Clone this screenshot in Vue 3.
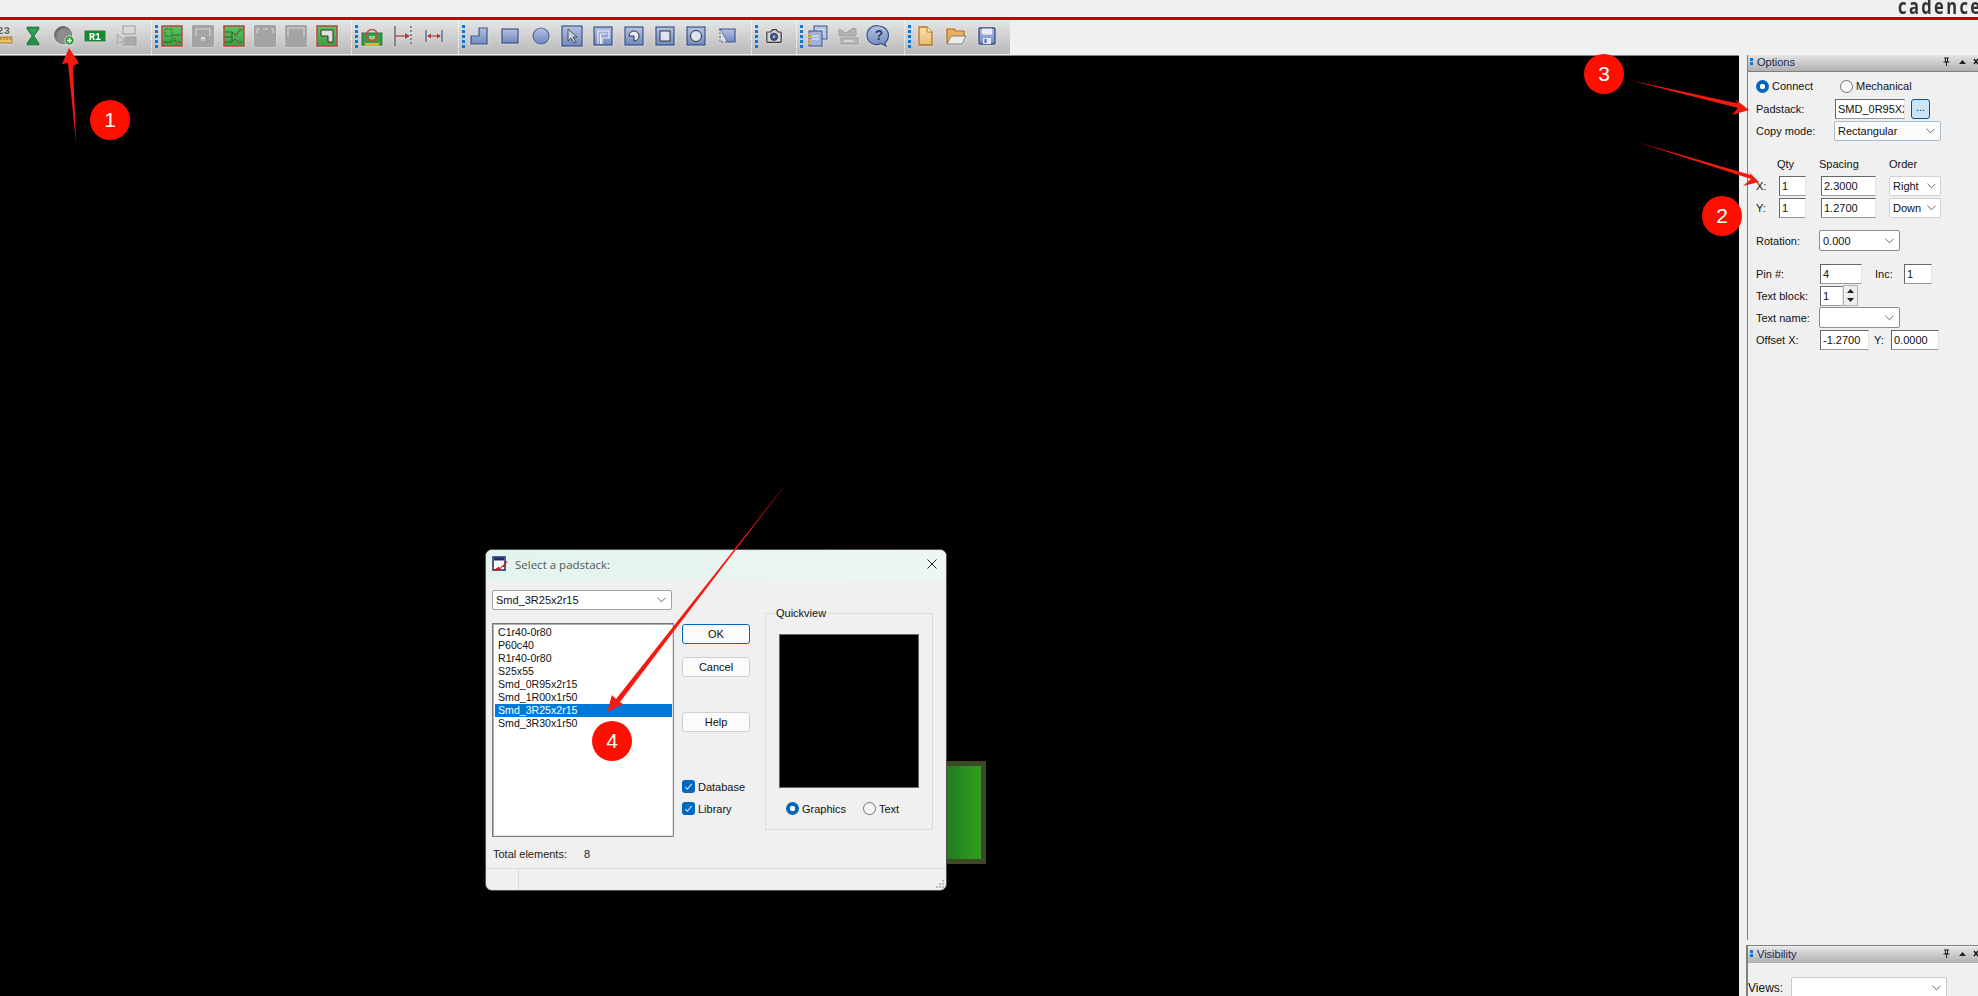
<template>
  <div class="page">
    <svg class="defs" width="0" height="0">
      <defs>
        <linearGradient id="blue" x1="0" y1="0" x2="0" y2="1"><stop offset="0" stop-color="#b4c2e2" /><stop offset="1" stop-color="#7189bf" /></linearGradient>
        <linearGradient id="board" x1="0" y1="0" x2="0" y2="1"><stop offset="0" stop-color="#5ec45e" /><stop offset="1" stop-color="#3aa040" /></linearGradient>
        <linearGradient id="pad" x1="0" y1="0" x2="1" y2="1"><stop offset="0" stop-color="#5c5c5c" /><stop offset="1" stop-color="#b4b4b4" /></linearGradient>
        <linearGradient id="paper" x1="0" y1="0" x2="0" y2="1"><stop offset="0" stop-color="#f8e2a8" /><stop offset="1" stop-color="#e4bf78" /></linearGradient>
      </defs>
    </svg>

    <header class="brandbar"><span class="brand">cadence</span></header>

    <nav class="toolbar">
      <div class="tgroup g1">
        <div class="tool"><svg class="ic" viewBox="0 0 24 24"><text x="7" y="10" class="rtext">23</text><rect x="2" y="13" width="20" height="6" fill="#ecc46e" stroke="#a97f2c" /><path d="M5 13v3M8 13v3M11 13v3M14 13v3M17 13v3M20 13v3" stroke="#8a6420" /></svg></div>
        <div class="tool"><svg class="ic" viewBox="0 0 24 24"><path d="M6 3h12v2l-5 7 5 7v2H6v-2l5-7-5-7z" fill="#2a8f46" stroke="#176b30" stroke-width=".7" /><path d="M8 5h8l-4 6z" fill="#2fa552" /></svg></div>
        <div class="tool"><svg class="ic" viewBox="0 0 24 24"><circle cx="11" cy="11" r="8.500" fill="url(#pad)" stroke="#6c6c6c" /><circle cx="11.500" cy="11.500" r="6.500" fill="#8d8d8d" /><circle cx="17.500" cy="16.500" r="4.600" fill="#2a9a3a" stroke="#e6e6e6" stroke-width=".8" /><path d="M15 16.500h5M17.500 14v5" stroke="#fff" stroke-width="1.400" /></svg></div>
        <div class="tool"><svg class="ic" viewBox="0 0 24 24"><rect x="2" y="7" width="20" height="10" fill="#0f8f2c" stroke="#2c7a3a" /><text x="12" y="15.500" class="rlabel">R1</text></svg></div>
        <div class="tool"><svg class="ic" viewBox="0 0 24 24"><rect x="9" y="2" width="12" height="8" fill="none" stroke="#a8a8a8" stroke-width="1.300" /><rect x="11" y="13" width="11" height="8" fill="#ababab" stroke="#999" /><path d="M3 10v11l3-3 3 4 2-1-3-4h4z" fill="#c8c8c8" stroke="#a2a2a2" /></svg></div>
      </div>

      <div class="tgroup g2">
        <i class="handle"></i>
        <div class="tool"><svg class="ic" viewBox="0 0 24 24"><rect x="2" y="2" width="20" height="20" fill="url(#board)" stroke="#b84c4c" stroke-width="1.600" /><rect x="5" y="5" width="7" height="7" fill="none" stroke="#1d5a26" stroke-dasharray="1 1" /><path d="M12 11h9M3 18h8l2-3 4 3h4" fill="none" stroke="#1d6a2a" /><circle cx="14" cy="15" r="1.300" fill="#59b85c" stroke="#8a3a3a" stroke-width=".6" /><circle cx="17.500" cy="18" r="1.300" fill="#59b85c" stroke="#8a3a3a" stroke-width=".6" /></svg></div>
        <div class="tool"><svg class="ic" viewBox="0 0 24 24"><rect x="1" y="1" width="22" height="22" rx="1.500" fill="#a4a4a4" /><path d="M5 12V5h14v7" fill="none" stroke="#d8d8d8" stroke-width="1.200" /><rect x="10" y="13" width="4" height="4" fill="#d8d8d8" /><rect x="11.300" y="15" width="1.400" height="2" fill="#a4a4a4" /></svg></div>
        <div class="tool"><svg class="ic" viewBox="0 0 24 24"><rect x="2" y="2" width="20" height="20" fill="url(#board)" stroke="#b84c4c" stroke-width="1.600" /><path d="M3 8h7l4 3 4-5h3M3 13h7M3 18h7l3-3 3 3h5M10 8v10" fill="none" stroke="#1d6a2a" /><circle cx="14" cy="11" r="1.300" fill="#59b85c" stroke="#8a3a3a" stroke-width=".6" /><circle cx="18" cy="6" r="1.300" fill="#59b85c" stroke="#8a3a3a" stroke-width=".6" /><circle cx="16" cy="18" r="1.300" fill="#59b85c" stroke="#8a3a3a" stroke-width=".6" /></svg></div>
        <div class="tool"><svg class="ic" viewBox="0 0 24 24"><rect x="1" y="1" width="22" height="22" rx="1.500" fill="#a4a4a4" /><path d="M4 9V5h3M10 5h5M18 5h2v4" fill="none" stroke="#d8d8d8" stroke-width="1.200" /></svg></div>
        <div class="tool"><svg class="ic" viewBox="0 0 24 24"><rect x="1" y="1" width="22" height="22" rx="1.500" fill="#a4a4a4" /><path d="M4 12V4h16v8" fill="none" stroke="#d8d8d8" stroke-width="1.200" /></svg></div>
        <div class="tool"><svg class="ic" viewBox="0 0 24 24"><rect x="2" y="2" width="20" height="20" fill="url(#board)" stroke="#b84c4c" stroke-width="1.600" /><path d="M6 6h12v12h-5v-6H6z" fill="#e0e0e0" stroke="#333" /></svg></div>
      </div>

      <div class="tgroup g3">
        <i class="handle"></i>
        <div class="tool"><svg class="ic" viewBox="0 0 24 24"><rect x="2" y="9" width="20" height="12" fill="#3a9a4a" stroke="#26703a" /><rect x="5" y="19" width="14" height="2.500" fill="#e6b82e" /><path d="M9 12h6v4H9z" fill="#8fd08f" /><circle cx="12" cy="11" r="5.500" fill="none" stroke="#c44c4c" stroke-width="1.600" /></svg></div>
        <div class="tool"><svg class="ic" viewBox="0 0 24 24"><path d="M4 2v20" stroke="#5a5a5a" stroke-width="1.300" /><path d="M20 2v20" stroke="#4a6090" stroke-width="1.300" stroke-dasharray="2 2" /><path d="M4 12h12" stroke="#b03c3c" stroke-width="1.300" /><path d="M19 12l-5-3v6z" fill="#b03c3c" /></svg></div>
        <div class="tool"><svg class="ic" viewBox="0 0 24 24"><path d="M4 6v12M20 6v12" stroke="#4a6090" stroke-width="1.300" /><path d="M7 12h10" stroke="#b03c3c" stroke-width="1.200" /><path d="M5 12l4-2.500v5zM19 12l-4-2.500v5z" fill="#b03c3c" /></svg></div>
      </div>

      <div class="tgroup g4">
        <i class="handle"></i>
        <div class="tool"><svg class="ic" viewBox="0 0 24 24"><path d="M4 12h8V4h8v16H4z" fill="url(#blue)" stroke="#3b5389" stroke-width="1.200" /></svg></div>
        <div class="tool"><svg class="ic" viewBox="0 0 24 24"><rect x="4" y="5" width="16" height="14" fill="url(#blue)" stroke="#3b5389" stroke-width="1.200" /></svg></div>
        <div class="tool"><svg class="ic" viewBox="0 0 24 24"><circle cx="12" cy="12" r="8" fill="url(#blue)" stroke="#4f67a0" stroke-width="1.200" /></svg></div>
        <div class="tool"><svg class="ic" viewBox="0 0 24 24"><rect x="2" y="2" width="20" height="20" fill="url(#blue)" stroke="#3b5389" stroke-width="1.200" /><path d="M8 5v12l3-3 3 5 2-1-3-5h4z" fill="#c8d2ea" stroke="#333" stroke-width=".8" /></svg></div>
        <div class="tool"><svg class="ic" viewBox="0 0 24 24"><rect x="3" y="3" width="18" height="18" fill="url(#blue)" stroke="#3b5389" stroke-width="1.200" /><path d="M7 20V7h11v7h-7v6M9.500 20V10h6" fill="none" stroke="#eef" stroke-width="1.200" /></svg></div>
        <div class="tool"><svg class="ic" viewBox="0 0 24 24"><rect x="3" y="3" width="18" height="18" fill="url(#blue)" stroke="#3b5389" stroke-width="1.200" /><path d="M12 12V7a5 5 0 1 1-5 5h5" fill="#eef" stroke="#333" transform="rotate(-90 12 12)" /></svg></div>
        <div class="tool"><svg class="ic" viewBox="0 0 24 24"><rect x="3" y="3" width="18" height="18" fill="url(#blue)" stroke="#3b5389" stroke-width="1.200" /><rect x="7" y="7" width="10" height="10" fill="#dde3f2" stroke="#333" /></svg></div>
        <div class="tool"><svg class="ic" viewBox="0 0 24 24"><rect x="3" y="3" width="18" height="18" fill="url(#blue)" stroke="#3b5389" stroke-width="1.200" /><circle cx="12" cy="12" r="5.500" fill="#dde3f2" stroke="#333" /></svg></div>
        <div class="tool"><svg class="ic" viewBox="0 0 24 24"><path d="M5 5h15v13H12z" fill="url(#blue)" stroke="#3b5389" stroke-width="1.200" /><path d="M5 5v13h7" fill="#dcdcdc" stroke="#3b5389" stroke-dasharray="2 1.500" /></svg></div>
      </div>

      <div class="tgroup g5">
        <i class="handle"></i>
        <div class="tool"><svg class="ic" viewBox="-3 -3 30 30"><path d="M4 7h4l2-3h5l2 3h3a1 1 0 0 1 1 1v11a1 1 0 0 1-1 1H4a1 1 0 0 1-1-1V8a1 1 0 0 1 1-1z" fill="#d2d2d2" stroke="#3a3a3a" stroke-width="1.500" /><circle cx="12" cy="13" r="4.500" fill="#3a5a9a" stroke="#2c2c2c" /><circle cx="12" cy="13" r="1.600" fill="#a9c0ea" /></svg></div>
      </div>

      <div class="tgroup g6">
        <i class="handle"></i>
        <div class="tool"><svg class="ic" viewBox="0 0 24 24"><rect x="9" y="2" width="13" height="13" fill="#b7c6e4" stroke="#3b5389" /><path d="M12 6h7M12 9h7" stroke="#f2f2f2" /><rect x="4" y="7" width="13" height="15" fill="#9fb2da" stroke="#3b5389" /><path d="M7 12h7M7 15h7" stroke="#f2f2f2" /><path d="M3 10h3M3 13h3M3 16h3M3 19h3" stroke="#e5b92e" stroke-width="1.300" /></svg></div>
        <div class="tool"><svg class="ic" viewBox="0 0 24 24"><path d="M3 5l7 4 7-5 3 1v7H3z" fill="#b2b2b2" stroke="#a0a0a0" /><rect x="5" y="14" width="17" height="6" fill="#b8b8b8" stroke="#9a9a9a" /><path d="M8 17h9" stroke="#dcdcdc" stroke-width="1.500" /></svg></div>
        <div class="tool"><svg class="ic" viewBox="0 0 24 24"><path d="M12 2a9.500 9.500 0 0 1 9.500 9.500c0 3.500-2 6-3.500 7.500l1 3-5-2.500A9.500 9.500 0 1 1 12 2z" fill="url(#blue)" stroke="#3b5389" stroke-width="1.200" /><text x="12" y="16" class="qmark">?</text></svg></div>
      </div>

      <div class="tgroup g7">
        <i class="handle"></i>
        <div class="tool"><svg class="ic" viewBox="0 0 24 24"><path d="M6 3h8l5 5v13H6z" fill="url(#paper)" stroke="#c06c24" stroke-width="1.300" /><path d="M14 3v5h5" fill="#fff3cc" stroke="#c06c24" /></svg></div>
        <div class="tool"><svg class="ic" viewBox="0 0 24 24"><path d="M3 20V5h7l2 2h8v5" fill="#ecb060" stroke="#b06a24" stroke-width="1.200" /><path d="M3 20l4-8h15l-4 8z" fill="#ececec" stroke="#808080" /></svg></div>
        <div class="tool"><svg class="ic" viewBox="0 0 24 24"><rect x="4" y="4" width="16" height="16" rx="1" fill="url(#blue)" stroke="#34497d" stroke-width="1.300" /><rect x="7" y="4.500" width="10" height="6" fill="#e8ecf6" /><rect x="8" y="14" width="8" height="6" fill="#dfe4f2" /><rect x="9.500" y="15" width="2" height="4" fill="#4f67a0" /></svg></div>
      </div>
    </nav>

    <div class="workspace">
      <main class="canvas">
        <div class="pad-shape"></div>

        <section class="dialog">
          <div class="dlg-title">
            <svg class="dlg-icon" viewBox="0 0 16 16"><rect x="1" y="1" width="12" height="13" fill="#fff" stroke="#1c2a6a" stroke-width="1.500" /><rect x="2" y="1.500" width="10" height="3" fill="#1c2a6a" /><path d="M2 14l5-3 1 2 7-8-3 6-2-1-3 4z" fill="#e02020" stroke="#c01010" stroke-width=".6" /></svg>
            <span class="dlg-caption">Select a padstack:</span>
            <svg class="dlg-close" viewBox="0 0 10 10"><path d="M.5.5l9 9M9.500.5l-9 9" stroke="#222" stroke-width="1" /></svg>
          </div>

          <div class="dlg-main">
            <div class="col-list">
              <div class="combo combo-dlg"><span>Smd_3R25x2r15</span><svg class="chev" viewBox="0 0 10 6"><path d="M.5.5L5 5 9.500.5" fill="none" stroke="#555" /></svg></div>
              <ul class="listbox">
                <li v-for="p in padstacks" :key="p" :class="{ sel: p === selected }">{{ p }}</li>
              </ul>
              <div class="total"><span class="total-label">Total elements:</span><span>{{ padstacks.length }}</span></div>
            </div>

            <div class="col-buttons">
              <button class="btn btn-ok">OK</button>
              <button class="btn btn-cancel">Cancel</button>
              <button class="btn btn-help">Help</button>
              <label class="check check-db"><i class="box"><svg viewBox="0 0 12 12"><path d="M3 6.500l2 2 4-5" fill="none" stroke="#cfe0f4" stroke-width="1" /></svg></i>Database</label>
              <label class="check check-lib"><i class="box"><svg viewBox="0 0 12 12"><path d="M3 6.500l2 2 4-5" fill="none" stroke="#cfe0f4" stroke-width="1" /></svg></i>Library</label>
            </div>

            <div class="quick">
              <span class="quick-legend">Quickview</span>
              <div class="preview"></div>
              <div class="quick-radios">
                <label class="radio r-graphics"><i class="dot on"></i>Graphics</label>
                <label class="radio"><i class="dot"></i>Text</label>
              </div>
            </div>
          </div>

          <div class="dlg-status"><i class="status-cell"></i><svg class="grip" viewBox="0 0 9 9"><path d="M7 1h2v2H7zM4 4h2v2H4zM7 4h2v2H7zM1 7h2v2H1zM4 7h2v2H4zM7 7h2v2H7z" fill="#bbb" /></svg></div>
        </section>
      </main>

      <aside class="dock">
        <section class="panel options">
          <div class="panel-head">
            <i class="panel-grip"></i><span class="panel-name">Options</span>
            <svg class="panel-btns" viewBox="0 0 36 10"><path d="M2 1h5M3.500 1v4h2V1M1.500 5h6M4.500 5v4" fill="none" stroke="#222" /><path d="M17 7l3.500-4L24 7z" fill="#222" /><path d="M32 2l4 5M36 2l-4 5" stroke="#111" stroke-width="1.400" /></svg>
          </div>
          <div class="panel-body">
            <div class="row row-radio">
              <label class="radio r-connect"><i class="dot on"></i>Connect</label>
              <label class="radio"><i class="dot"></i>Mechanical</label>
            </div>
            <div class="row row-pad">
              <span class="lbl lbl-pad">Padstack:</span>
              <span class="field f-pad">SMD_0R95X2R15</span>
              <button class="more">...</button>
            </div>
            <div class="row row-copy">
              <span class="lbl lbl-copy">Copy mode:</span>
              <div class="combo combo-copy"><span>Rectangular</span><svg class="chev" viewBox="0 0 10 6"><path d="M.5.5L5 5 9.500.5" fill="none" stroke="#555" /></svg></div>
            </div>
            <div class="row row-head">
              <span class="h-qty">Qty</span><span class="h-spacing">Spacing</span><span>Order</span>
            </div>
            <div class="row row-x">
              <span class="lbl lbl-xy">X:</span>
              <span class="field f-qty">1</span>
              <span class="field f-spacing">2.3000</span>
              <div class="combo combo-order"><span>Right</span><svg class="chev" viewBox="0 0 10 6"><path d="M.5.5L5 5 9.500.5" fill="none" stroke="#555" /></svg></div>
            </div>
            <div class="row row-y">
              <span class="lbl lbl-xy">Y:</span>
              <span class="field f-qty">1</span>
              <span class="field f-spacing">1.2700</span>
              <div class="combo combo-order"><span>Down</span><svg class="chev" viewBox="0 0 10 6"><path d="M.5.5L5 5 9.500.5" fill="none" stroke="#555" /></svg></div>
            </div>
            <div class="row row-rot">
              <span class="lbl">Rotation:</span>
              <div class="combo combo-wide"><span>0.000</span><svg class="chev" viewBox="0 0 10 6"><path d="M.5.5L5 5 9.500.5" fill="none" stroke="#555" /></svg></div>
            </div>
            <div class="row row-pin">
              <span class="lbl">Pin #:</span>
              <span class="field f-pin">4</span>
              <span class="lbl-inc">Inc:</span>
              <span class="field f-inc">1</span>
            </div>
            <div class="row row-block">
              <span class="lbl">Text block:</span>
              <span class="field f-block">1</span>
              <div class="spin">
                <svg viewBox="0 0 13 8"><path d="M3 6l3.500-4L10 6z" fill="#222" /></svg>
                <svg viewBox="0 0 13 8"><path d="M3 2l3.500 4L10 2z" fill="#222" /></svg>
              </div>
            </div>
            <div class="row row-name">
              <span class="lbl">Text name:</span>
              <div class="combo combo-wide combo-name"><span></span><svg class="chev" viewBox="0 0 10 6"><path d="M.5.5L5 5 9.500.5" fill="none" stroke="#555" /></svg></div>
            </div>
            <div class="row row-offset">
              <span class="lbl">Offset X:</span>
              <span class="field f-offx">-1.2700</span>
              <span class="lbl-offy">Y:</span>
              <span class="field f-offy">0.0000</span>
            </div>
          </div>
        </section>

        <section class="panel visibility">
          <div class="panel-head">
            <i class="panel-grip"></i><span class="panel-name">Visibility</span>
            <svg class="panel-btns" viewBox="0 0 36 10"><path d="M2 1h5M3.500 1v4h2V1M1.500 5h6M4.500 5v4" fill="none" stroke="#222" /><path d="M17 7l3.500-4L24 7z" fill="#222" /><path d="M32 2l4 5M36 2l-4 5" stroke="#111" stroke-width="1.400" /></svg>
          </div>
          <div class="vis-row">
            <span class="vis-label">Views:</span>
            <div class="combo combo-views"><span></span><svg class="chev" viewBox="0 0 10 6"><path d="M.5.5L5 5 9.500.5" fill="none" stroke="#555" /></svg></div>
          </div>
        </section>
      </aside>
    </div>

    <!-- red markup drawn over the screenshot -->
    <svg class="arrows" viewBox="0 0 1978 996">
      <polygon points="76,143 73,66 79,63 69,48 62,64 68,63" />
      <polygon points="1629,80 1738,108 1732,115 1749,110 1735,99 1738,103.500" />
      <polygon points="1637,142 1751,179 1743,186 1759,182 1748,171 1751,175" />
      <polygon points="789,480 620,702 623,704 607,712 612,695 616,699" />
    </svg>
    <span v-for="b in badges" :key="b.n" class="badge" :style="{ left: b.x + 'px', top: b.y + 'px' }">{{ b.n }}</span>
  </div>
</template>

<script setup>
const padstacks = [
  'C1r40-0r80',
  'P60c40',
  'R1r40-0r80',
  'S25x55',
  'Smd_0R95x2r15',
  'Smd_1R00x1r50',
  'Smd_3R25x2r15',
  'Smd_3R30x1r50'
]
const selected = 'Smd_3R25x2r15'

// badge centres
const badges = [
  { n: 1, x: 110, y: 120 },
  { n: 2, x: 1722, y: 216 },
  { n: 3, x: 1604, y: 74 },
  { n: 4, x: 612, y: 741 }
]
</script>

<style>
html, body { margin: 0; background: #000; }
</style>

<style scoped>
.page { position: relative; width: 1978px; height: 996px; overflow: hidden; background: #f0f0f0; font-family: "Liberation Sans", Arial, sans-serif; font-size: 11px; color: #111; }
.defs { position: absolute; }
i { display: block; font-style: normal; }

.brandbar { height: 17px; border-bottom: 3px solid #c80000; background: #f0f0f0; padding-left: 1898px; overflow: hidden; }
.brand { display: block; width: 130px; font-family: "Open Sans", sans-serif; font-weight: 700; font-size: 22px; line-height: 17px; letter-spacing: 3.2px; color: #333; white-space: nowrap; margin-top: -3px; transform: scaleX(.75); transform-origin: left; }

.toolbar { height: 35px; display: flex; background: #f0f0f0; }
.tgroup { height: 34px; flex: none; display: flex; align-items: center; gap: 3px; box-sizing: border-box; border-left: 1px dotted #fff; padding-left: 3px; background: linear-gradient(#e6e6e6, #b8b8b8); }
.handle { width: 3px; height: 23px; background: repeating-linear-gradient(#0a78d8 0 3px, transparent 3px 5px); flex: none; margin: 0 -3px 2px 0; }
.g1 { width: 151px; border-left: 0; padding-left: 0; }
.g1 .tool:first-child { margin-left: -12px; }
.g2 { width: 200px; }
.g3 { width: 107px; }
.g4 { width: 293px; }
.g5 { width: 45px; }
.g5 .tool { margin-left: 2px; }
.g6 { width: 108px; }
.g7 { width: 106px; }
.tool { width: 28px; height: 34px; padding-bottom: 2px; box-sizing: border-box; flex: none; display: flex; align-items: center; justify-content: center; }
.ic { width: 24px; height: 24px; flex: none; filter: drop-shadow(0 0 1.5px #e4e4e4); overflow: visible; }
.rtext { font-family: "Liberation Mono", monospace; font-weight: 700; font-size: 11px; fill: #666; }
.rlabel { font-family: "Liberation Mono", monospace; font-weight: 700; font-size: 10px; fill: #fff; text-anchor: middle; }
.qmark { font-family: "Liberation Sans", sans-serif; font-weight: 700; font-size: 14px; fill: #2a3e70; text-anchor: middle; }

.workspace { height: 941px; display: flex; }
.canvas { position: relative; flex: 1; background: #000; border-top: 1px solid #858585; }
.dock { width: 239px; box-sizing: border-box; padding-left: 8px; display: flex; flex-direction: column; background: #f0f0f0; flex: none; }

.pad-shape { position: absolute; left: 900px; top: 705px; width: 76px; height: 93px; border: 5px solid #3b4a24; background: linear-gradient(90deg, #217f1e 60%, #2fa121); }

/* dialog */
.dialog { position: absolute; left: 485px; top: 493px; width: 462px; height: 342px; box-sizing: border-box; display: flex; flex-direction: column; background: #f0f0f0; border: 1px solid #4c4c4c; border-radius: 7px; overflow: hidden; }
.dlg-title { height: 30px; flex: none; display: flex; align-items: center; padding: 0 9px 2px 6px; box-sizing: border-box; background: linear-gradient(90deg, #e2f4ed, #eef6f2); }
.dlg-icon { width: 16px; height: 16px; margin-right: 7px; }
.dlg-caption { flex: 1; font-family: "Open Sans", sans-serif; font-size: 11.5px; color: #555; }
.dlg-close { width: 10px; height: 10px; }
.dlg-main { flex: 1; display: flex; padding: 10px 0 0 6px; }
.col-list { width: 182px; flex: none; }
.col-buttons { width: 83px; flex: none; margin-left: 8px; padding-top: 34px; box-sizing: border-box; }
.combo { display: flex; align-items: center; justify-content: space-between; box-sizing: border-box; background: #fff; border: 1px solid #a0a0a0; border-radius: 2px; padding: 0 5px 0 3px; }
.combo span { white-space: nowrap; }
.chev { width: 9px; height: 6px; flex: none; }
.combo-dlg { width: 180px; height: 20px; }
.listbox { list-style: none; margin: 13px 0 0; padding: 2px 1px 0 2px; height: 214px; box-sizing: border-box; width: 182px; background: #fff; border: 1px solid #7a7a7a; border-right-color: #8c8c8c; box-shadow: inset 1px 1px 0 #b0b0b0, inset -1px -1px 0 #e2e2e2; }
.listbox li { height: 13px; line-height: 13px; font-size: 10.6px; padding-left: 3px; color: #111; }
.listbox li.sel { background: #0078d7; color: #fff; }
.total { margin-top: 10px; height: 14px; line-height: 14px; display: flex; padding-left: 1px; color: #222; }
.total-label { width: 91px; }
.btn { display: block; width: 68px; height: 20px; padding: 0; box-sizing: border-box; background: #fbfbfb; border: 1px solid #d0d0d0; border-radius: 3px; font: inherit; color: #111; }
.btn-ok { border: 1px solid #0067c0; }
.btn-cancel { margin-top: 13px; }
.btn-help { margin-top: 35px; }
.check { display: flex; align-items: center; height: 13px; gap: 3px; }
.check-db { margin-top: 48px; }
.check-lib { margin-top: 9px; }
.box { width: 13px; height: 13px; border-radius: 3px; background: #0067c0; }
.box svg { display: block; }
.quick { position: relative; width: 168px; height: 217px; flex: none; margin-top: 23px; box-sizing: border-box; border: 1px solid #dcdcdc; padding: 20px 0 0 13px; }
.quick-legend { position: absolute; left: 8px; top: -7px; padding: 0 2px; background: #f0f0f0; line-height: 13px; }
.preview { width: 140px; height: 154px; box-sizing: border-box; background: #000; border: 1px solid #666; }
.quick-radios { display: flex; margin: 14px 0 0 7px; }
.radio { display: flex; align-items: center; gap: 3px; white-space: nowrap; }
.r-graphics { width: 77px; }
.dot { width: 13px; height: 13px; box-sizing: border-box; border: 1px solid #707070; border-radius: 50%; background: #f8f8f8; flex: none; }
.dot.on { border: 0; background: radial-gradient(circle, #fff 0 2.5px, #0067c0 3px); }
.dlg-status { position: relative; height: 21px; flex: none; border-top: 1px solid #dcdcdc; }
.status-cell { width: 32px; height: 100%; border-right: 1px solid #dcdcdc; }
.grip { position: absolute; right: 2px; bottom: 2px; width: 9px; height: 9px; }

/* docked panels */
.panel { border-left: 1px solid #808080; }
.options { height: 885px; flex: none; box-shadow: -1px 0 0 #f0f0f0; }
.panel-head { height: 16px; display: flex; align-items: center; box-sizing: border-box; background: linear-gradient(#e4e4e4, #b0b0b0); padding: 0 0 3px 2px; }
.panel-grip { width: 3px; height: 8px; background: repeating-linear-gradient(#0a78d8 0 3px, transparent 3px 4px); margin-right: 4px; }
.panel-name { flex: 1; color: #1a2850; font-size: 11px; }
.panel-btns { width: 36px; height: 10px; flex: none; overflow: hidden; }
.panel-body { border-top: 1px solid #808080; padding: 6px 0 0 9px; }
.row { display: flex; align-items: center; }
.lbl { width: 63px; flex: none; margin-left: -1px; }
.field { display: block; flex: none; box-sizing: border-box; height: 20px; line-height: 18px; padding-left: 2px; overflow: hidden; white-space: nowrap; background: #fff; border: 1px solid; border-color: #666 #e4e4e4 #999 #666; }
.row-radio { height: 16px; }
.r-connect { width: 84px; margin-left: -1px; }
.row-pad { margin-top: 5px; height: 20px; }
.lbl-pad { width: 79px; }
.f-pad { width: 70px; }
.more { width: 19px; height: 20px; margin-left: 6px; padding: 0 0 4px; background: #cce4f7; border: 1px solid #005499; border-radius: 3px; font: inherit; color: #222; }
.row-copy { margin-top: 2px; height: 19px; }
.lbl-copy { width: 78px; }
.combo-copy { width: 107px; height: 20px; background: #fbfbfb; border-color: #a9bccc; }
.row-head { margin-top: 16px; height: 16px; }
.h-qty { margin-left: 20px; width: 42px; }
.h-spacing { width: 70px; }
.row-x { margin-top: 4px; height: 20px; }
.row-y { margin-top: 2px; height: 20px; }
.lbl-xy { width: 23px; margin-left: -1px; }
.f-qty { width: 27px; }
.f-spacing { width: 55px; margin-left: 15px; }
.combo-order { width: 52px; height: 20px; margin-left: 13px; border-color: #d0d0d0; padding-right: 4px; }
.row-rot { margin-top: 12px; height: 21px; }
.combo-wide { width: 81px; height: 21px; border-color: #8c8c8c; }
.row-pin { margin-top: 13px; height: 20px; }
.lbl-inc { margin-left: 13px; width: 29px; }
.f-pin { width: 42px; margin-left: 1px; }
.f-inc { width: 28px; }
.row-block { margin-top: 1px; height: 21px; }
.f-block { width: 23px; margin-left: 1px; }
.spin { width: 15px; height: 21px; box-sizing: border-box; border: 1px solid #b0b0b0; display: flex; flex-direction: column; justify-content: space-around; background: #eee; }
.spin svg { width: 13px; height: 8px; display: block; }
.row-name { margin-top: 1px; height: 21px; }
.row-offset { margin-top: 2px; height: 20px; }
.f-offx { width: 49px; margin-left: 1px; }
.lbl-offy { margin-left: 5px; width: 17px; }
.f-offy { width: 48px; }
.visibility { margin: 5px 0 0 -1px; flex: 1; border-top: 1px solid #808080; padding-top: 1px; border-left: 2px solid #808080; }
.vis-row { display: flex; align-items: center; margin-top: 14px; }
.vis-label { width: 43px; font-size: 12px; }
.combo-views { width: 156px; height: 22px; border-color: #c8c8c8; border-radius: 2px; }

/* annotations */
.arrows { position: absolute; left: 0; top: 0; width: 1978px; height: 996px; pointer-events: none; }
.arrows polygon { fill: #f51a10; }
.badge { position: absolute; width: 40px; height: 40px; margin: -20px 0 0 -20px; border-radius: 50%; background: #fe1000; color: #fff; font-size: 21px; line-height: 40px; text-align: center; }
</style>
